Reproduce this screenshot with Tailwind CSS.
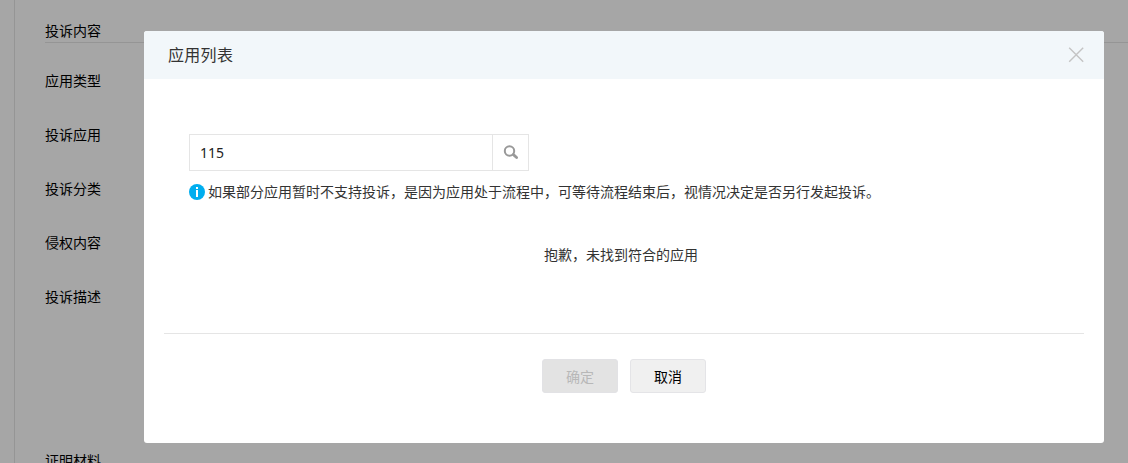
<!DOCTYPE html>
<html lang="zh-CN">
<head>
	<meta charset="UTF-8">
	<meta name="viewport" content="width=device-width, initial-scale=1.0">
	<script src="https://cdn.jsdelivr.net/npm/@tailwindcss/browser@4"></script>
	<title>投诉</title>
</head>

<body class="h-screen overflow-hidden bg-white font-['Noto_Sans','Noto_Sans_CJK_SC',sans-serif] text-sm text-black">
	<!-- Complaint form -->
	<main class="ml-3.5 h-screen overflow-hidden border-l border-[#e5e5e5] pl-[30px]">
		<h2 class="flex h-[43px] items-end border-b border-[#e5e5e5] leading-[22px]">投诉内容</h2>
		<div class="mt-[11px] flex flex-col leading-[54px]">
			<div class="h-[54px]">应用类型</div>
			<div class="h-[54px]">投诉应用</div>
			<div class="h-[54px]">投诉分类</div>
			<div class="h-[54px]">侵权内容</div>
			<div class="h-[164px]">投诉描述</div>
			<div class="h-[54px]">证明材料</div>
		</div>
	</main>

	<!-- Dialog -->
	<div class="fixed inset-0 bg-black/35 pt-[31px] pl-36">
		<div class="h-[412px] w-[960px] overflow-hidden rounded-[3px] bg-white text-[#333]">
			<div class="flex h-12 items-center justify-between bg-[#f2f7fa] pr-5 pl-6">
				<h3 class="text-base tracking-[0.3px]">应用列表</h3>
				<button type="button" aria-label="关闭">
					<svg class="block size-4" viewBox="0 0 16 16" fill="none" stroke="#c4c4c4" stroke-width="1.4"><path d="M1.2 .8l14 14M15.2 .8l-14 14"/></svg>
				</button>
			</div>
			<div class="px-5 pt-[55px]">
				<div class="ml-[25px] flex h-[37px] w-[340px] border border-[#e5e5e5]">
					<input value="115" class="w-[302px] px-2.5 text-[#222] outline-none">
					<button type="button" aria-label="搜索" class="flex flex-1 items-center justify-center border-l border-[#e5e5e5]">
						<svg class="block size-4" viewBox="0 0 16 16" fill="none" stroke="#999"><circle cx="6.5" cy="6" r="4.7" stroke-width="2"/><path d="M10.4 9.6l3.2 2.9" stroke-width="2.8" stroke-linecap="round"/></svg>
					</button>
				</div>
				<p class="mt-2.5 ml-[25px] flex h-[22px] items-center gap-[3px]">
					<svg class="block size-4" viewBox="0 0 16 16"><circle cx="8" cy="8" r="8" fill="#00aeef"/><path d="M7 3h2v2H7zM7 6h2v7H7z" fill="#fff"/></svg>
					<span>如果部分应用暂时不支持投诉，是因为应用处于流程中，可等待流程结束后，视情况决定是否另行发起投诉。</span>
				</p>
				<p class="mt-[41px] h-[22px] pr-[6px] text-center leading-[22px]">抱歉，未找到符合的应用</p>
				<div class="mt-[67px] flex justify-center gap-3 border-t border-[#e5e5e5] pt-[25px]">
					<button type="button" disabled class="h-[34px] w-[76px] rounded-[3px] border border-[#e2e2e5] bg-[#e3e3e3] pt-0.5 text-[#b8b8b8]">确定</button>
					<button type="button" class="h-[34px] w-[76px] rounded-[3px] border border-[#e4e4e7] bg-[#f0f0f0] pt-0.5 text-black">取消</button>
				</div>
			</div>
		</div>
	</div>
</body>
</html>
